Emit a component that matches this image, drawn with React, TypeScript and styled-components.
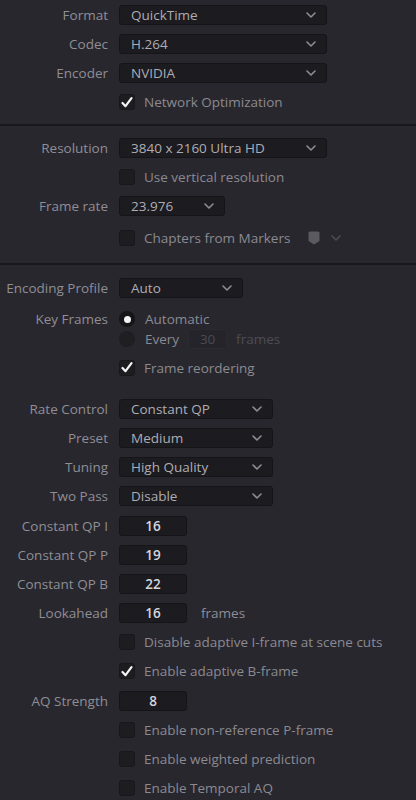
import React from "react";
import styled, { createGlobalStyle } from "styled-components";

const GlobalStyle = createGlobalStyle`
  html, body { margin: 0; padding: 0; background: #28272e; }
  body { font-family: "Open Sans", "Liberation Sans", sans-serif; font-size: 13.5px; }
  * { box-sizing: border-box; }
`;

const Panel = styled.div`
  display: flex;
  flex-direction: column;
  width: 416px;
  height: 800px;
  overflow: hidden;
  background: #28272e;
`;

const Section = styled.div<{ $pt: number; $pb: number }>`
  display: flex;
  flex-direction: column;
  padding-top: ${(p) => p.$pt}px;
  padding-bottom: ${(p) => p.$pb}px;
`;

const Divider = styled.div`
  height: 2px;
  background: #19181d;
  flex-shrink: 0;
`;

const Row = styled.div<{ $h?: number; $mt?: number }>`
  display: grid;
  grid-template-columns: 108px 1fr;
  column-gap: 11px;
  align-items: center;
  height: ${(p) => p.$h ?? 29.2}px;
  margin-top: ${(p) => p.$mt ?? 0}px;
  flex-shrink: 0;
`;

const Label = styled.div`
  text-align: right;
  color: #8f8e95;
  white-space: nowrap;
  line-height: 18px;
`;

const Controls = styled.div`
  display: flex;
  align-items: center;
  gap: 14px;
`;

const SelectBox = styled.div<{ $w: number }>`
  width: ${(p) => p.$w}px;
  height: 20px;
  background: #1c1b20;
  border: 1px solid #151419;
  border-radius: 3px;
  display: flex;
  align-items: center;
  justify-content: space-between;
  padding: 0 10px 0 11px;
  color: #aeadb3;
  line-height: 18px;
`;

const NumBox = styled.div<{ $disabled?: boolean; $w?: number }>`
  width: ${(p) => p.$w ?? 68}px;
  height: 20px;
  background: ${(p) => (p.$disabled ? "#25242a" : "#1c1b20")};
  border: 1px solid ${(p) => (p.$disabled ? "#2b2a30" : "#151419")};
  border-radius: 3px;
  display: flex;
  align-items: center;
  justify-content: center;
  color: ${(p) => (p.$disabled ? "#4b4a51" : "#d6d5da")};
  font-weight: ${(p) => (p.$disabled ? 400 : 600)};
  line-height: 18px;
`;

const Unit = styled.span<{ $dim?: boolean }>`
  color: ${(p) => (p.$dim ? "#4e4d54" : "#8f8e95")};
  line-height: 18px;
`;

const Check = styled.div`
  display: flex;
  align-items: center;
  gap: 9px;
  color: #8b8a91;
  line-height: 18px;
  white-space: nowrap;
`;

const Box = styled.div`
  width: 16px;
  height: 16px;
  border-radius: 3px;
  background: #1d1c21;
  border: 1px solid #18171c;
  display: flex;
  align-items: center;
  justify-content: center;
  flex-shrink: 0;
`;

const RadioDot = styled.div<{ $on?: boolean }>`
  width: 16px;
  height: 16px;
  border-radius: 50%;
  background: ${(p) => (p.$on ? "#151418" : "#1f1e23")};
  display: flex;
  align-items: center;
  justify-content: center;
  flex-shrink: 0;
  &::after {
    content: "";
    display: ${(p) => (p.$on ? "block" : "none")};
    width: 7px;
    height: 7px;
    border-radius: 50%;
    background: #f2f2f4;
  }
`;

const RadioLine = styled.div`
  display: flex;
  align-items: center;
  gap: 10px;
  height: 20px;
  color: #8b8a91;
  line-height: 18px;
`;

const RadioStack = styled.div`
  display: flex;
  flex-direction: column;
`;

const GroupRow = styled.div<{ $mt: number }>`
  display: grid;
  grid-template-columns: 108px 1fr;
  column-gap: 11px;
  align-items: start;
  margin-top: ${(p) => p.$mt}px;
  & > ${Label} {
    line-height: 20px;
  }
`;

const EveryBox = styled.div`
  display: flex;
  align-items: center;
  gap: 9px;
`;

const Tag = styled.div`
  display: flex;
  align-items: center;
  gap: 11px;
  margin-left: 4px;
`;

const Chevron = ({ color = "#8e8d93" }: { color?: string }) => (
  <svg width="10" height="6" viewBox="0 0 10 6" fill="none">
    <path d="M1 1 L5 5 L9 1" stroke={color} strokeWidth="1.6" strokeLinecap="round" strokeLinejoin="round" />
  </svg>
);

const Tick = () => (
  <svg width="12" height="11" viewBox="0 0 12 11" fill="none">
    <path d="M1.5 6 L4.5 9.2 L10.5 1.2" stroke="#f4f4f6" strokeWidth="2.2" strokeLinecap="round" strokeLinejoin="round" />
  </svg>
);

const Select = ({ w, value }: { w: number; value: string }) => (
  <SelectBox $w={w}>
    <span>{value}</span>
    <Chevron />
  </SelectBox>
);

const CheckItem = ({ on, text }: { on?: boolean; text: string }) => (
  <Check>
    <Box>{on ? <Tick /> : null}</Box>
    <span>{text}</span>
  </Check>
);

const SelectRow = ({ label, w, value, mt }: { label: string; w: number; value: string; mt?: number }) => (
  <Row $mt={mt}>
    <Label>{label}</Label>
    <Controls>
      <Select w={w} value={value} />
    </Controls>
  </Row>
);

const NumRow = ({ label, value, unit }: { label: string; value: string; unit?: string }) => (
  <Row>
    <Label>{label}</Label>
    <Controls>
      <NumBox>{value}</NumBox>
      {unit ? <Unit>{unit}</Unit> : null}
    </Controls>
  </Row>
);

const CheckRow = ({ on, text, h, mt }: { on?: boolean; text: string; h?: number; mt?: number }) => (
  <Row $h={h} $mt={mt}>
    <span />
    <CheckItem on={on} text={text} />
  </Row>
);

export default function App() {
  return (
    <>
      <GlobalStyle />
      <Panel>
        <Section $pt={0} $pb={7}>
          <SelectRow label="Format" w={208} value="QuickTime" />
          <SelectRow label="Codec" w={208} value="H.264" />
          <SelectRow label="Encoder" w={208} value="NVIDIA" />
          <CheckRow on text="Network Optimization" />
        </Section>
        <Divider />
        <Section $pt={7.5} $pb={10}>
          <SelectRow label="Resolution" w={208} value="3840 x 2160 Ultra HD" />
          <CheckRow text="Use vertical resolution" />
          <SelectRow label="Frame rate" w={106} value="23.976" />
          <Row $mt={2.5}>
            <span />
            <Controls>
              <CheckItem text="Chapters from Markers" />
              <Tag>
                <svg width="12" height="14" viewBox="0 0 12 14">
                  <path d="M2 0.5 H10 Q11.5 0.5 11.5 2 V10 L6 13.5 L0.5 10 V2 Q0.5 0.5 2 0.5 Z" fill="#5b5a61" />
                </svg>
                <Chevron color="#4c4b52" />
              </Tag>
            </Controls>
          </Row>
        </Section>
        <Divider />
        <Section $pt={8.5} $pb={0}>
          <SelectRow label="Encoding Profile" w={124} value="Auto" />
          <GroupRow $mt={7}>
            <Label>Key Frames</Label>
            <RadioStack>
              <RadioLine>
                <RadioDot $on />
                <span>Automatic</span>
              </RadioLine>
              <RadioLine>
                <RadioDot />
                <EveryBox>
                  <span>Every</span>
                  <NumBox $disabled $w={39}>30</NumBox>
                  <Unit $dim>frames</Unit>
                </EveryBox>
              </RadioLine>
            </RadioStack>
          </GroupRow>
          <CheckRow on text="Frame reordering" mt={4} />
          <SelectRow label="Rate Control" w={154} value="Constant QP" mt={11.8} />
          <SelectRow label="Preset" w={154} value="Medium" />
          <SelectRow label="Tuning" w={154} value="High Quality" />
          <SelectRow label="Two Pass" w={154} value="Disable" />
          <NumRow label="Constant QP I" value="16" />
          <NumRow label="Constant QP P" value="19" />
          <NumRow label="Constant QP B" value="22" />
          <NumRow label="Lookahead" value="16" unit="frames" />
          <CheckRow text="Disable adaptive I-frame at scene cuts" />
          <CheckRow on text="Enable adaptive B-frame" />
          <NumRow label="AQ Strength" value="8" />
          <CheckRow text="Enable non-reference P-frame" />
          <CheckRow text="Enable weighted prediction" />
          <CheckRow text="Enable Temporal AQ" />
        </Section>
      </Panel>
    </>
  );
}
